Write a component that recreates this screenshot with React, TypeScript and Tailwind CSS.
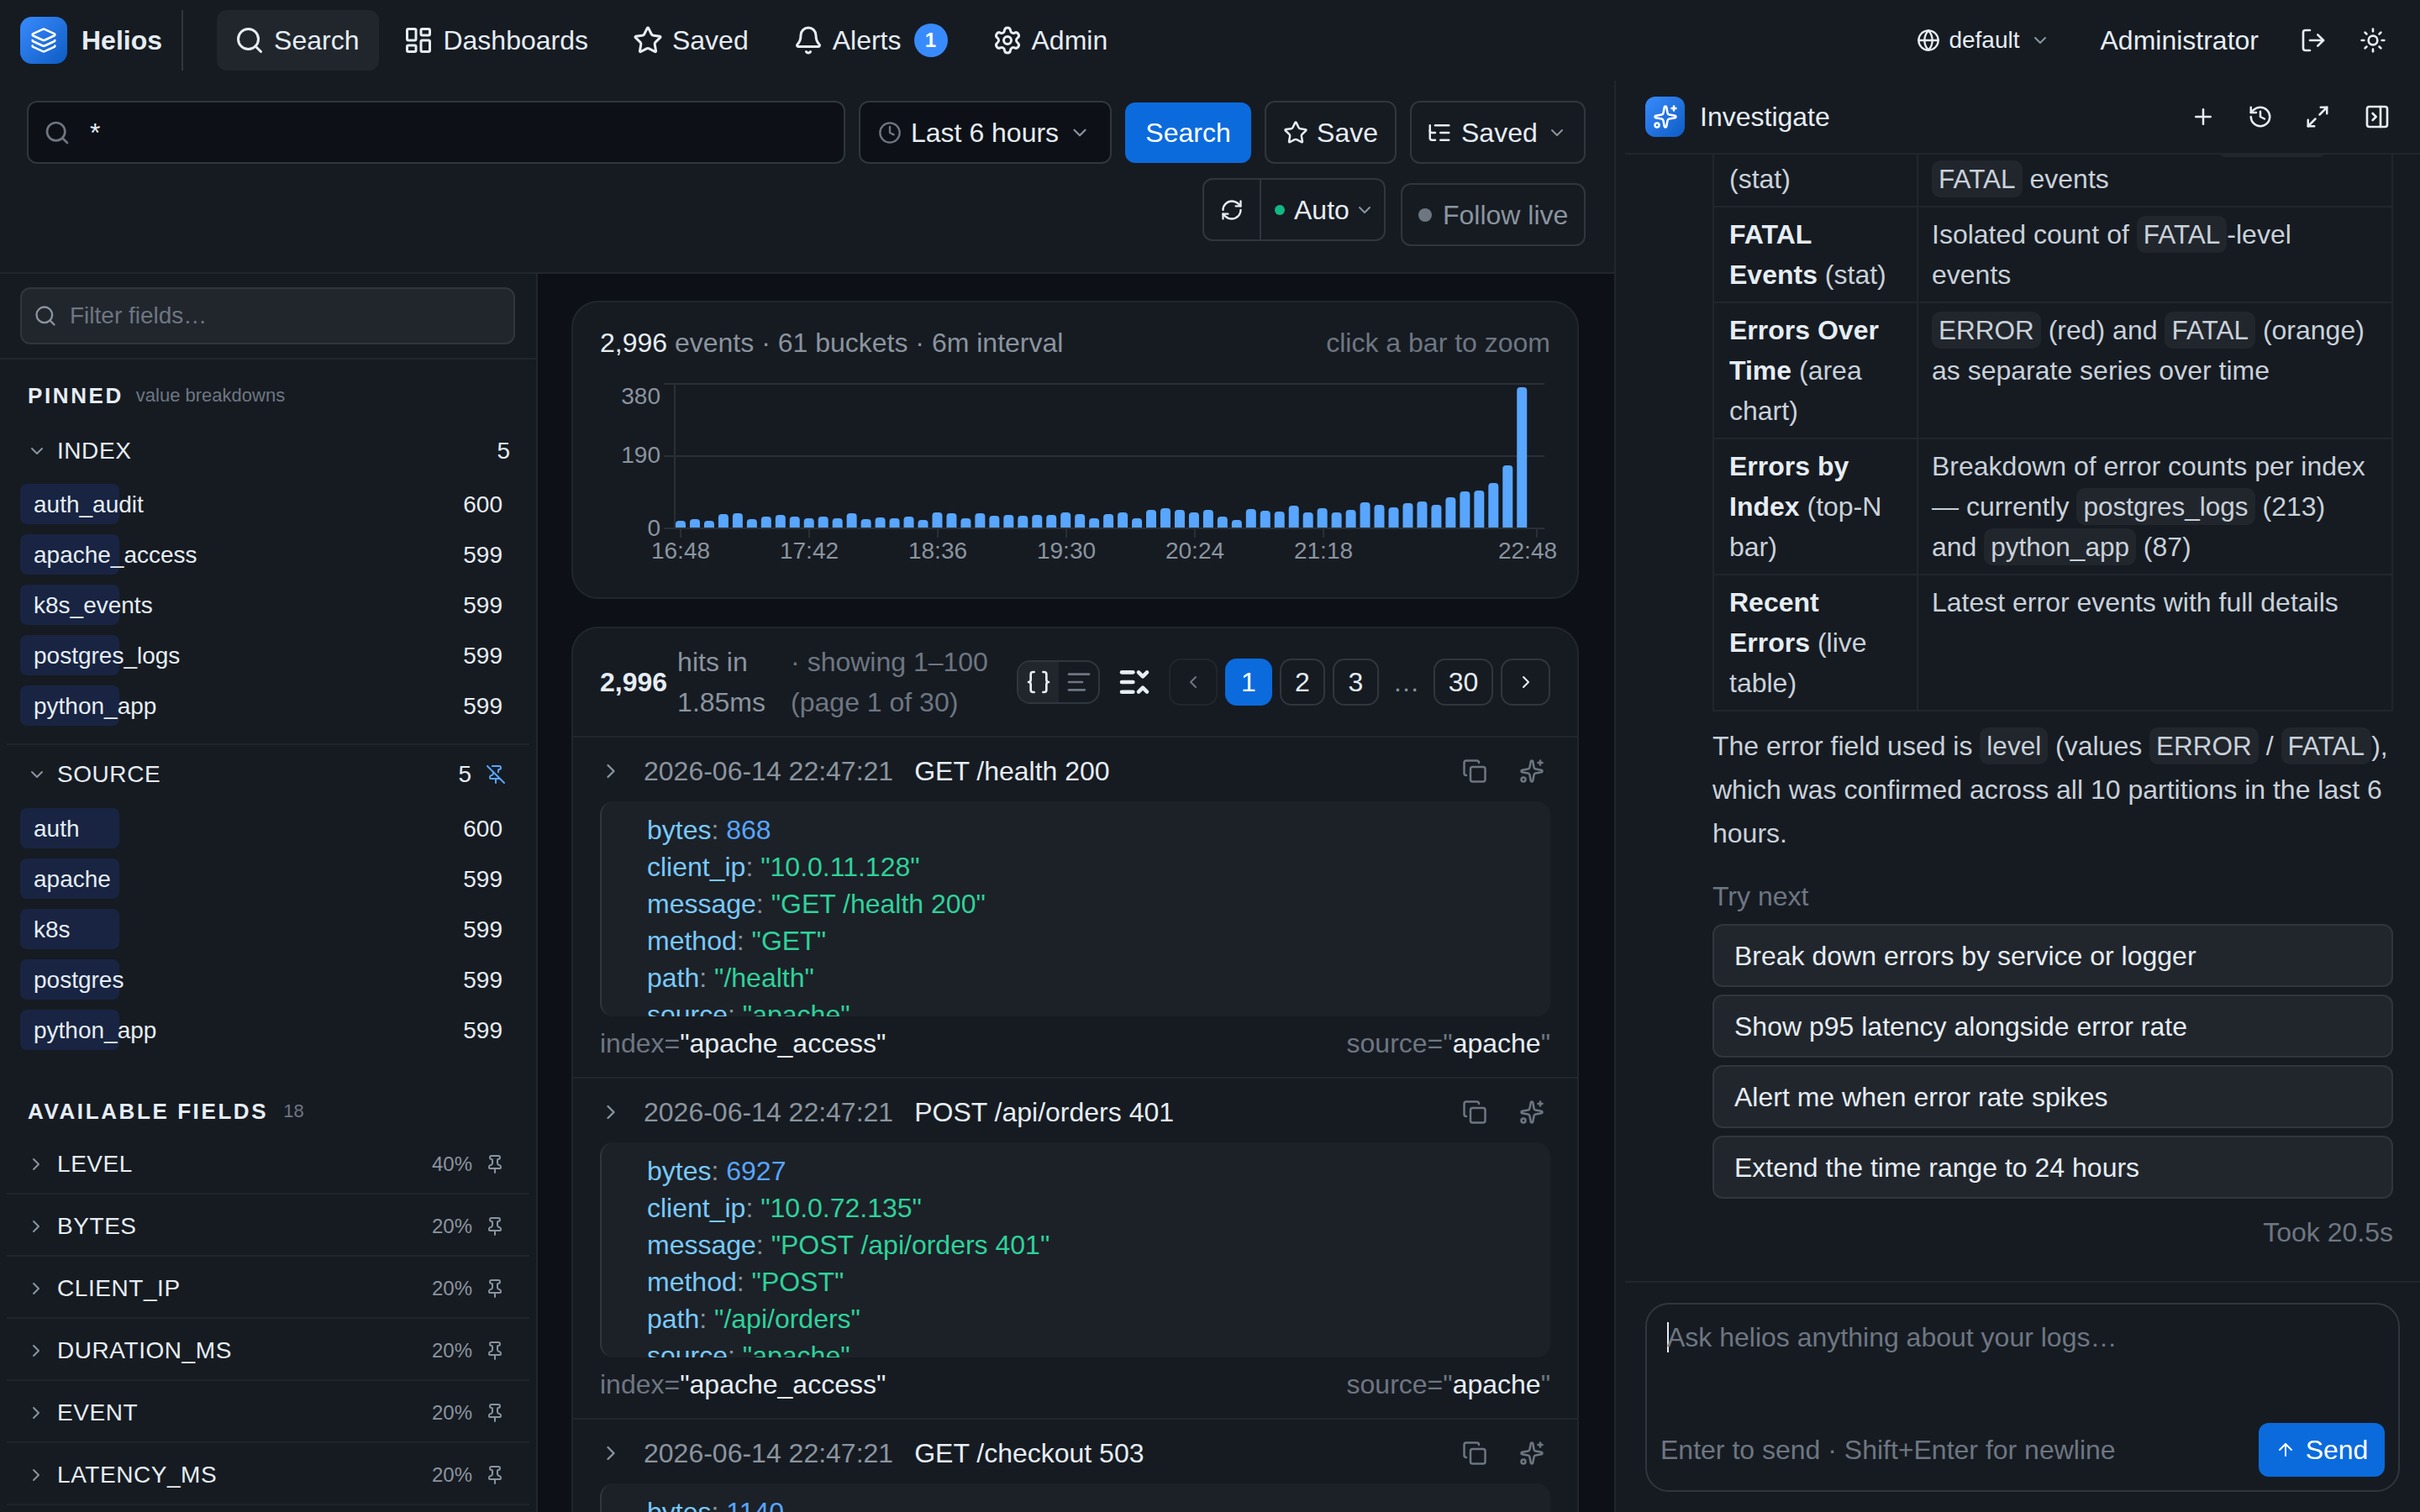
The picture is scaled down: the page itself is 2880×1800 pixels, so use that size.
import {
  AlignLeft, ArrowUp, Bell, Braces, ChevronDown, ChevronLeft, ChevronRight, Clock, Copy, Globe, History, Layers,
  LayoutDashboard, ListChevronsDownUp, ListTree, LogOut, Maximize2, PanelRightClose, Pin, PinOff, Plus, RefreshCw,
  Search, Settings, Sparkles, Star, Sun,
} from 'lucide-react';
import type { ReactNode } from 'react';

// heights of the histogram bars, read off the chart (px above the baseline)
const BARS = [
  8, 10, 8, 16, 17, 10, 13, 15, 13, 11, 13, 11, 17, 10, 12, 11, 13, 9, 18, 17, 11, 17, 14, 15, 14, 15, 15, 18, 16, 11,
  16, 18, 11, 21, 23, 21, 18, 21, 13, 9, 22, 20, 19, 26, 18, 23, 18, 21, 30, 27, 24, 29, 31, 27, 36, 43, 44, 53, 74, 167,
];

const X_TICKS = [
  { x: 96, tx: 96, label: '16:48' },
  { x: 249, tx: 249, label: '17:42' },
  { x: 402, tx: 402, label: '18:36' },
  { x: 555, tx: 555, label: '19:30' },
  { x: 708, tx: 708, label: '20:24' },
  { x: 861, tx: 861, label: '21:18' },
  { x: 1115, tx: 1104, label: '22:48' },
];

function Histogram() {
  return (
    <svg width="1131" height="240" className="block mt-[21px] overflow-visible">
      <path d="M76 12H1124M76 98H1124M76 184H1124M89 12V184" stroke="#2a2f37" strokeWidth="2" fill="none" />
      {BARS.map((h, i) => {
        const x = 90 + i * 16.97;
        return <path key={i} d={`M${x} 183V${183 - h + 4}q0-4 4-4h4q4 0 4 4V183Z`} fill="#58a6ff" />;
      })}
      {X_TICKS.map((t) => (
        <g key={t.label}>
          <line x1={t.x} x2={t.x} y1="184" y2="195" stroke="#2a2f37" strokeWidth="2" />
          <text x={t.tx} y="220" textAnchor="middle" fontSize="28" fill="#8b949e">{t.label}</text>
        </g>
      ))}
      <text x="72" y="36" textAnchor="end" fontSize="28" fill="#8b949e">380</text>
      <text x="72" y="106" textAnchor="end" fontSize="28" fill="#8b949e">190</text>
      <text x="72" y="193" textAnchor="end" fontSize="28" fill="#8b949e">0</text>
    </svg>
  );
}

function NavItem({ icon, label, active, badge }: { icon: ReactNode; label: string; active?: boolean; badge?: string }) {
  return (
    <div className={`h-[72px] pl-[21px] pr-[24px] flex items-center gap-[11px] rounded-[12px] text-[#e6edf3] ${active ? 'bg-[#21262d]' : ''}`}>
      {icon}
      <span>{label}</span>
      {badge && (
        <span className="ml-[4px] w-[40px] h-[40px] rounded-full bg-[#388bfd] text-white text-[24px] font-bold flex items-center justify-center">{badge}</span>
      )}
    </div>
  );
}

function ValueRow({ name, count }: { name: string; count: number }) {
  return (
    <div className="relative h-[48px] flex items-center justify-between pl-[16px] pr-[15px] pt-[2px] text-[28px] text-[#e6edf3]">
      <div className="absolute inset-y-0 left-0 w-[20%] rounded-[8px] bg-[#182442]"></div>
      <span className="relative">{name}</span>
      <span className="relative">{count}</span>
    </div>
  );
}

function FieldRow({ name, pct }: { name: string; pct: string }) {
  return (
    <div className="h-[74px] mx-[8px] pl-[23px] pr-[29px] pt-[3px] flex items-center border-b-2 border-[#1f242c]">
      <ChevronRight className="w-[24px] h-[24px] text-[#8b949e] mr-[13px]" strokeWidth={2} />
      <span className="text-[28px] tracking-[0.56px] text-[#e6edf3]">{name}</span>
      <span className="ml-auto text-[24px] text-[#8b949e]">{pct}</span>
      <Pin className="w-[24px] h-[24px] ml-[15px] text-[#8b949e]" strokeWidth={2} />
    </div>
  );
}

function PageBtn({ children, w, active, dim }: { children: ReactNode; w: string; active?: boolean; dim?: boolean }) {
  return (
    <div
      className={`${w} h-[56px] rounded-[14px] flex items-center justify-center ${
        active ? 'bg-[#0b6bdd] text-white' : `border-2 ${dim ? 'text-[#6e7681] border-[#21262d]' : 'border-[#30363d] text-[#e6edf3]'}`
      }`}
    >
      {children}
    </div>
  );
}

function Key({ k }: { k: string }) {
  return (
    <>
      <span className="text-[#79c9fa]">{k}</span>
      <span className="text-[#8b949e]">: </span>
    </>
  );
}

function Line({ k, v }: { k: string; v: string }) {
  return (
    <div className="h-[44px] leading-[44px]">
      <Key k={k} />
      <span className="text-[#2fd29a]">"{v}"</span>
    </div>
  );
}

function LogRow({ message, bytes, ip, method, path }: { message: string; bytes: number; ip: string; method: string; path: string }) {
  return (
    <div className="border-b-2 border-[#21262d] h-[406px] px-[32px] shrink-0">
      <div className="h-[76px] pt-[4px] flex items-center">
        <ChevronRight className="w-[28px] h-[28px] -ml-[1px] text-[#8b949e] mr-[25px]" strokeWidth={2} />
        <span className="text-[#8b949e]">2026-06-14 22:47:21</span>
        <span className="ml-[25px] text-[#e6edf3]">{message}</span>
        <Copy className="ml-auto w-[30px] h-[30px] text-[#6e7681]" strokeWidth={2} />
        <Sparkles className="ml-[38px] mr-[7px] w-[30px] h-[30px] text-[#6e7681]" strokeWidth={2} />
      </div>
      <div className="h-[256px] overflow-hidden rounded-[16px] bg-[#1c2128] border-l-2 border-[#30363d] pl-[54px] pt-[12px]">
        <div className="h-[44px] leading-[44px]">
          <Key k="bytes" />
          <span className="text-[#58a6ff]">{bytes}</span>
        </div>
        <Line k="client_ip" v={ip} />
        <Line k="message" v={message} />
        <Line k="method" v={method} />
        <Line k="path" v={path} />
        <Line k="source" v="apache" />
      </div>
      <div className="h-[64px] flex items-center justify-between">
        <span className="text-[#6e7681]">index=<span className="text-[#e6edf3]">"apache_access"</span></span>
        <span className="text-[#6e7681]">source="<span className="text-[#e6edf3]">apache</span>"</span>
      </div>
    </div>
  );
}

function Chip({ children }: { children: ReactNode }) {
  return <code className="font-['Liberation_Sans',Arial,sans-serif] text-[31.5px] bg-[#21262d] rounded-[10px] px-[8px] py-[4px] text-[#c9d1d9]">{children}</code>;
}

function Row({ head, note, children }: { head: string; note: string; children: ReactNode }) {
  return (
    <tr>
      <td className="border-2 border-[#21262d] align-top py-[8px] px-[18px] text-[#c9d1d9]">
        <strong className="font-bold text-[#e6edf3]">{head}</strong> {note}
      </td>
      <td className="border-2 border-[#21262d] align-top py-[8px] pl-[16px] pr-[22px] text-[#c9d1d9]">{children}</td>
    </tr>
  );
}

export default function App() {
  const pinned = [
    ['auth_audit', 600], ['apache_access', 599], ['k8s_events', 599], ['postgres_logs', 599], ['python_app', 599],
  ] as const;
  const sources = [['auth', 600], ['apache', 599], ['k8s', 599], ['postgres', 599], ['python_app', 599]] as const;
  const fields = [
    ['LEVEL', '40%'], ['BYTES', '20%'], ['CLIENT_IP', '20%'], ['DURATION_MS', '20%'], ['EVENT', '20%'], ['LATENCY_MS', '20%'], ['LOGGER', '20%'],
  ];
  const suggestions = [
    'Break down errors by service or logger',
    'Show p95 latency alongside error rate',
    'Alert me when error rate spikes',
    'Extend the time range to 24 hours',
  ];

  return (
    <div className="w-[2880px] h-[1800px] overflow-hidden flex flex-col bg-[#0d1117] font-['Liberation_Sans',Arial,sans-serif] text-[32px] leading-[48px] text-[#e6edf3]">
      {/* Top nav */}
      <header className="h-[96px] shrink-0 flex items-center bg-[#161b22] pl-[24px] pr-[40px]">
        <div className="w-[56px] h-[56px] rounded-[14px] bg-gradient-to-br from-[#388bfd] to-[#0b5cc4] flex items-center justify-center">
          <Layers className="w-[32px] h-[32px] text-white" strokeWidth={2} />
        </div>
        <span className="ml-[17px] font-bold">Helios</span>
        <div className="ml-[23px] w-[2px] h-[72px] bg-[#30363d]"></div>
        <nav className="ml-[40px] flex items-center gap-[8px]">
          <NavItem active icon={<Search className="w-[36px] h-[36px]" strokeWidth={2} />} label="Search" />
          <NavItem icon={<LayoutDashboard className="w-[36px] h-[36px]" strokeWidth={2} />} label="Dashboards" />
          <NavItem icon={<Star className="w-[36px] h-[36px]" strokeWidth={2} />} label="Saved" />
          <NavItem icon={<Bell className="w-[36px] h-[36px]" strokeWidth={2} />} label="Alerts" badge="1" />
          <NavItem icon={<Settings className="w-[36px] h-[36px]" strokeWidth={2} />} label="Admin" />
        </nav>
        <div className="ml-auto flex items-center text-[#e6edf3]">
          <Globe className="w-[28px] h-[28px]" strokeWidth={2} />
          <span className="ml-[10px] text-[28px]">default</span>
          <ChevronDown className="ml-[12px] w-[24px] h-[24px] text-[#8b949e]" strokeWidth={2} />
          <span className="ml-[60px]">Administrator</span>
          <LogOut className="ml-[49px] w-[32px] h-[32px]" strokeWidth={2} />
          <Sun className="ml-[39px] w-[32px] h-[32px]" strokeWidth={2} />
        </div>
      </header>

      <div className="flex-1 min-h-0 flex">
        {/* Search side */}
        <div className="w-[1921px] shrink-0 flex flex-col min-h-0">
          <div className="h-[230px] shrink-0 bg-[#161b22] border-b-2 border-[#21262d] pt-[24px] pl-[32px] pr-[34px] flex flex-col">
            <div className="flex gap-[16px] h-[75px]">
              <div className="flex-1 rounded-[12px] border-2 border-[#30363d] bg-[#0d1117] flex items-center pl-[18px]">
                <Search className="w-[32px] h-[32px] text-[#6e7681]" strokeWidth={2} />
                <span className="ml-[23px] text-[#e6edf3]">*</span>
              </div>
              <div className="w-[301px] rounded-[12px] border-2 border-[#30363d] bg-[#0d1117] flex items-center pl-[21px]">
                <Clock className="w-[28px] h-[28px] text-[#6e7681]" strokeWidth={2} />
                <span className="ml-[11px]">Last 6 hours</span>
                <ChevronDown className="ml-[12px] w-[26px] h-[26px] text-[#8b949e]" strokeWidth={2} />
              </div>
              <div className="w-[150px] h-[72px] mt-[2px] rounded-[12px] bg-[#0b6bdd] text-white flex items-center justify-center">Search</div>
              <div className="w-[157px] rounded-[12px] border-2 border-[#30363d] flex items-center justify-center gap-[10px]">
                <Star className="w-[30px] h-[30px]" strokeWidth={2} />
                <span>Save</span>
              </div>
              <div className="w-[209px] rounded-[12px] border-2 border-[#30363d] flex items-center pl-[18px]">
                <ListTree className="w-[30px] h-[30px]" strokeWidth={2} />
                <span className="ml-[11px]">Saved</span>
                <ChevronDown className="ml-[11px] w-[24px] h-[24px] text-[#8b949e]" strokeWidth={2} />
              </div>
            </div>
            <div className="flex justify-end gap-[18px] mt-[17px]">
              <div className="w-[218px] h-[75px] rounded-[12px] border-2 border-[#30363d] flex items-stretch">
                <div className="w-[68px] border-r-2 border-[#30363d] flex items-center justify-center">
                  <RefreshCw className="w-[28px] h-[28px]" strokeWidth={2} />
                </div>
                <div className="flex-1 flex items-center pl-[16px]">
                  <span className="w-[12px] h-[12px] rounded-full bg-[#10b981]"></span>
                  <span className="ml-[11px]">Auto</span>
                  <ChevronDown className="ml-[6px] w-[24px] h-[24px] text-[#8b949e]" strokeWidth={2} />
                </div>
              </div>
              <div className="w-[220px] h-[75px] mt-[6px] rounded-[12px] border-2 border-[#30363d] flex items-center pl-[19px] text-[#8b949e]">
                <span className="w-[16px] h-[16px] rounded-full bg-[#6e7681]"></span>
                <span className="ml-[13px]">Follow live</span>
              </div>
            </div>
          </div>

          <div className="flex-1 min-h-0 flex">
            {/* Fields sidebar */}
            <aside className="w-[640px] shrink-0 bg-[#161b22] border-r-2 border-[#21262d] overflow-hidden">
              <div className="h-[102px] border-b-2 border-[#21262d] pt-[16px] pl-[24px] pr-[25px]">
                <div className="h-[68px] rounded-[12px] border-2 border-[#30363d] bg-[#21262d] flex items-center pl-[14px]">
                  <Search className="w-[28px] h-[28px] text-[#8b949e]" strokeWidth={2} />
                  <span className="ml-[15px] text-[28px] text-[#6e7681]">Filter fields…</span>
                </div>
              </div>
              <div className="h-[79px] pt-[28px] pl-[33px] flex items-start">
                <span className="text-[26px] leading-[30px] font-bold tracking-[2.6px] text-[#e6edf3]">PINNED</span>
                <span className="ml-[15px] text-[22px] leading-[30px] text-[#6e7681]">value breakdowns</span>
              </div>
              <div className="h-[60px] pl-[32px] pr-[31px] flex items-center">
                <ChevronDown className="w-[24px] h-[24px] text-[#8b949e] mr-[12px]" strokeWidth={2} />
                <span className="text-[28px] tracking-[0.56px]">INDEX</span>
                <span className="ml-auto text-[28px]">5</span>
              </div>
              <div className="mt-[9px] ml-[24px] mr-[25px] flex flex-col gap-[12px]">
                {pinned.map(([n, c]) => <ValueRow key={n} name={n} count={c} />)}
              </div>
              <div className="mt-[21px] mx-[8px] h-[2px] bg-[#1f242c]"></div>
              <div className="mt-[5px] h-[60px] pl-[32px] pr-[36px] flex items-center">
                <ChevronDown className="w-[24px] h-[24px] text-[#8b949e] mr-[12px]" strokeWidth={2} />
                <span className="text-[28px] tracking-[0.56px]">SOURCE</span>
                <span className="ml-auto text-[28px]">5</span>
                <PinOff className="ml-[17px] w-[24px] h-[24px] text-[#58a6ff]" strokeWidth={2} />
              </div>
              <div className="mt-[10px] ml-[24px] mr-[25px] flex flex-col gap-[12px]">
                {sources.map(([n, c]) => <ValueRow key={n} name={n} count={c} />)}
              </div>
              <div className="mt-[52px] mb-[4px] h-[42px] pl-[33px] flex items-center">
                <span className="text-[26px] font-bold tracking-[2.6px]">AVAILABLE FIELDS</span>
                <span className="ml-[18px] text-[22px] text-[#6e7681]">18</span>
              </div>
              {fields.map(([n, p]) => <FieldRow key={n} name={n} pct={p} />)}
            </aside>

            {/* Results */}
            <main className="flex-1 min-w-0 overflow-hidden pl-[40px] pr-[42px] pt-[32px] flex flex-col gap-[33px]">
              <section className="h-[355px] shrink-0 rounded-[32px] border-2 border-[#21262d] bg-[#161b22] px-[32px] pt-[32px]">
                <div className="h-[32px] flex items-center justify-between">
                  <span className="text-[#8b949e]"><span className="text-[#e6edf3]">2,996</span> events · 61 buckets · 6m interval</span>
                  <span className="text-[#6e7681]">click a bar to zoom</span>
                </div>
                <Histogram />
              </section>
              <section className="shrink-0 rounded-t-[32px] border-2 border-[#21262d] bg-[#161b22] flex flex-col">
                <div className="h-[130px] border-b-2 border-[#21262d] px-[32px] flex items-center">
                  <span className="font-bold">2,996</span>
                  <span className="ml-[12px] w-[124px] text-[#8b949e]">hits in 1.85ms</span>
                  <span className="ml-[11px] w-[250px] text-[#6e7681]">· showing 1–100 (page 1 of 30)</span>
                  <div className="ml-auto w-[99px] h-[52px] rounded-[16px] border-2 border-[#30363d] flex overflow-hidden">
                    <div className="w-[48px] bg-[#21262d] flex items-center justify-center"><Braces className="w-[32px] h-[32px]" strokeWidth={2} /></div>
                    <div className="flex-1 flex items-center justify-center"><AlignLeft className="w-[32px] h-[32px] text-[#6e7681]" strokeWidth={2} /></div>
                  </div>
                  <ListChevronsDownUp className="ml-[21px] w-[40px] h-[40px]" strokeWidth={2.75} />
                  <div className="ml-[21px] flex items-center gap-[9px]">
                    <PageBtn w="w-[58px]" dim><ChevronLeft className="w-[24px] h-[24px]" strokeWidth={2} /></PageBtn>
                    <PageBtn w="w-[56px]" active>1</PageBtn>
                    <PageBtn w="w-[54px]">2</PageBtn>
                    <PageBtn w="w-[55px]">3</PageBtn>
                    <span className="w-[47px] text-center text-[#8b949e]">…</span>
                    <PageBtn w="w-[71px]">30</PageBtn>
                    <PageBtn w="w-[59px]"><ChevronRight className="w-[24px] h-[24px]" strokeWidth={2} /></PageBtn>
                  </div>
                </div>
                <LogRow message="GET /health 200" bytes={868} ip="10.0.11.128" method="GET" path="/health" />
                <LogRow message="POST /api/orders 401" bytes={6927} ip="10.0.72.135" method="POST" path="/api/orders" />
                <LogRow message="GET /checkout 503" bytes={1140} ip="10.0.4.17" method="GET" path="/checkout" />
              </section>
            </main>
          </div>
        </div>

        {/* Investigate panel */}
        <div className="flex-1 min-w-0 bg-[#161b22] border-l-2 border-[#21262d] pl-[11px] flex flex-col">
          <div className="h-[88px] shrink-0 border-b-2 border-[#21262d] flex items-center pl-[24px] pr-[35px]">
            <div className="w-[47px] h-[48px] rounded-[12px] bg-gradient-to-br from-[#388bfd] to-[#0b5cc4] flex items-center justify-center">
              <Sparkles className="w-[30px] h-[30px] text-white" strokeWidth={2} />
            </div>
            <span className="ml-[18px]">Investigate</span>
            <div className="ml-auto flex items-center gap-[38px]">
              <Plus className="w-[30px] h-[30px]" strokeWidth={2} />
              <History className="w-[30px] h-[30px]" strokeWidth={2} />
              <Maximize2 className="w-[30px] h-[30px]" strokeWidth={2} />
              <PanelRightClose className="ml-[2px] w-[32px] h-[32px]" strokeWidth={2} />
            </div>
          </div>
          <div className="flex-1 min-h-0 overflow-hidden pl-[104px] pr-[32px]">
            <table className="-mt-[53px] w-[810px] table-fixed border-collapse">
              <colgroup>
                <col className="w-[243px]" />
                <col />
              </colgroup>
              <tbody>
                <Row head="Total Errors" note="(stat)">
                  Count of all events with <Chip>ERROR</Chip> or <Chip>FATAL</Chip> events
                </Row>
                <Row head="FATAL Events" note="(stat)">
                  Isolated count of <Chip>FATAL</Chip>-level events
                </Row>
                <Row head="Errors Over Time" note="(area chart)">
                  <Chip>ERROR</Chip> (red) and <Chip>FATAL</Chip> (orange) as separate series over time
                </Row>
                <Row head="Errors by Index" note="(top-N bar)">
                  Breakdown of error counts per index — currently <Chip>postgres_logs</Chip> (213) and <Chip>python_app</Chip> (87)
                </Row>
                <Row head="Recent Errors" note="(live table)">
                  Latest error events with full details
                </Row>
              </tbody>
            </table>
            <p className="mt-[15px] leading-[52px] text-[#c9d1d9]">
              The error field used is <Chip>level</Chip> (values <Chip>ERROR</Chip> / <Chip>FATAL</Chip>), which was confirmed across all 10 partitions in the last 6 hours.
            </p>
            <div className="mt-[25px] text-[#6e7681]">Try next</div>
            <div className="mt-[9px] flex flex-col gap-[9px]">
              {suggestions.map((s) => (
                <div key={s} className="h-[75px] rounded-[12px] border-2 border-[#30363d] bg-[#21262d] pl-[24px] flex items-center text-[#e6edf3]">{s}</div>
              ))}
            </div>
            <div className="mt-[16px] text-right text-[#6e7681]">Took 20.5s</div>
          </div>
          <div className="h-[275px] shrink-0 border-t-2 border-[#21262d] pt-[24px] pl-[24px] pr-[24px]">
            <div className="relative h-[225px] rounded-[28px] border-2 border-[#30363d]">
              <div className="pl-[24px] pt-[15px] text-[#6e7681] flex items-center">
                <span className="w-[2px] h-[36px] bg-[#e6edf3] -mr-[2px]"></span>
                <span>Ask helios anything about your logs…</span>
              </div>
              <div className="absolute left-[16px] right-[16px] bottom-[16px] flex items-center justify-between">
                <span className="text-[#6e7681]">Enter to send · Shift+Enter for newline</span>
                <div className="w-[150px] h-[64px] rounded-[12px] bg-[#0b6bdd] text-white flex items-center justify-center gap-[12px]">
                  <ArrowUp className="w-[24px] h-[24px]" strokeWidth={2} />
                  <span>Send</span>
                </div>
              </div>
            </div>
          </div>
        </div>
      </div>
    </div>
  );
}
